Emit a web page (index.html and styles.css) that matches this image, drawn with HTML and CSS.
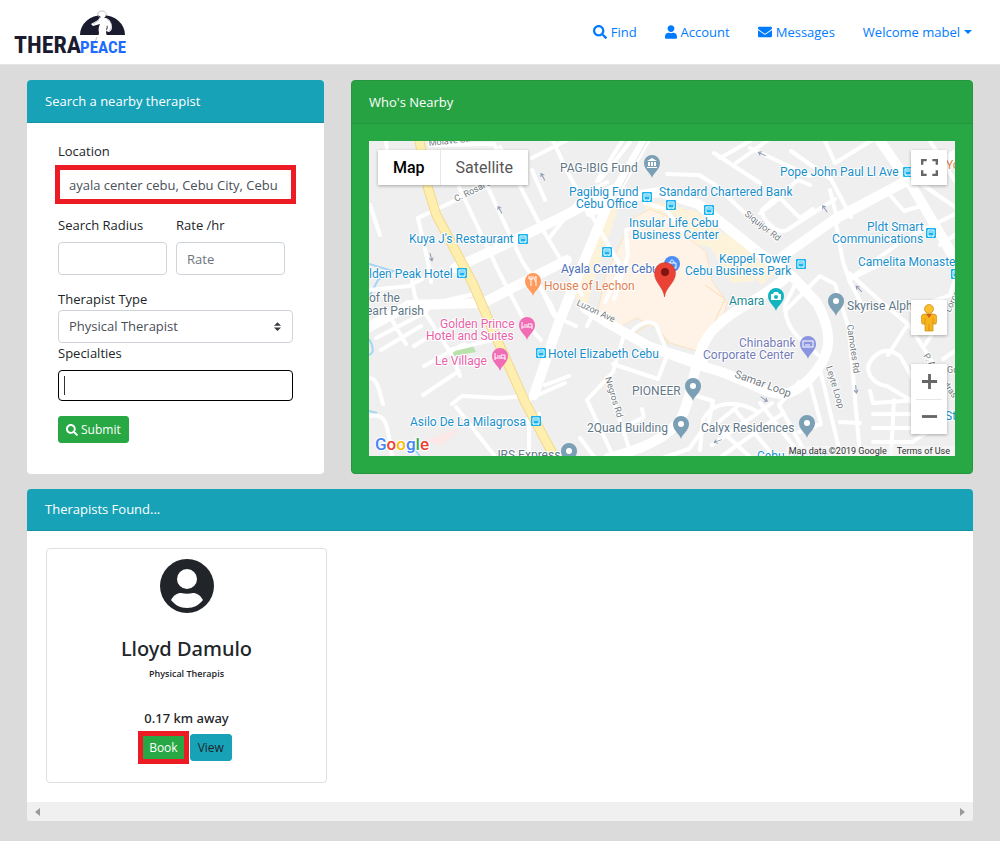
FILE: index.html
```html
<!DOCTYPE html>
<html lang="en">
<head>
<meta charset="utf-8">
<title>Therapeace</title>
<link rel="stylesheet" href="styles.css">
</head>
<body>
<header class="navbar">
  <a class="brand" href="#" aria-label="Therapeace">
    <svg class="brand-logo" viewBox="0 0 116 44">
      <path d="M69 25a22.500 20 0 0 1 45 0z" fill="#1b1b2f"/>
      <path d="M87 3c0-4 8-4 8 1 0 2-1 3-2 4 4 0 6 2 7 5 2 4 1 8-2 9l-3-1c2-2 2-4 1-6l-1 7 1 5v16h-5l-2-14-3 14h-6c3-8 7-14 8-20-1-4 0-7 1-9l-7 2-2-2 7-4c1-2 2-2 3-3-2-1-3-2-3-4z" fill="#fff"/>
      <path d="M89 8c-4-4-2-7 2-7s6 4 2 7M88 10l-6 4M96 9c5 3 6 8 2 12M86 27c-2 6-5 9-6 15" fill="none" stroke="#a9abb2" stroke-width="0.700"/>
      <text class="logo-thera" x="3" y="43">THERA</text>
      <text class="logo-peace" x="69" y="43">PEACE</text>
    </svg>
  </a>
  <nav class="nav-links">
    <a href="#"><svg class="icon" viewBox="0 0 512 512"><path d="M505 442.700 405.300 343c-4.500-4.500-10.600-7-17-7H372c27.600-35.300 44-79.700 44-128C416 93.100 322.900 0 208 0S0 93.100 0 208s93.100 208 208 208c48.300 0 92.700-16.400 128-44v16.300c0 6.400 2.500 12.500 7 17l99.700 99.700c9.400 9.400 24.600 9.400 33.900 0l28.300-28.300c9.400-9.400 9.400-24.600.1-34zM208 336c-70.700 0-128-57.200-128-128 0-70.700 57.200-128 128-128 70.700 0 128 57.200 128 128 0 70.700-57.200 128-128 128z"/></svg>Find</a>
    <a href="#"><svg class="icon icon-user" viewBox="0 0 448 512"><path d="M224 256c70.700 0 128-57.300 128-128S294.700 0 224 0 96 57.300 96 128s57.300 128 128 128zm89.600 32h-16.700c-22.200 10.200-46.900 16-72.900 16s-50.600-5.800-72.900-16h-16.700C60.200 288 0 348.200 0 422.400V464c0 26.500 21.500 48 48 48h352c26.500 0 48-21.500 48-48v-41.600c0-74.200-60.200-134.400-134.400-134.400z"/></svg>Account</a>
    <a href="#"><svg class="icon" viewBox="0 0 512 512"><path d="M502.300 190.800c3.900-3.100 9.700-.2 9.700 4.700V400c0 26.500-21.500 48-48 48H48c-26.500 0-48-21.500-48-48V195.600c0-5 5.700-7.800 9.700-4.700 22.400 17.400 52.100 39.500 154.100 113.600 21.100 15.400 56.700 47.800 92.200 47.600 35.700.3 72-32.800 92.300-47.600 102-74.100 131.600-96.300 154-113.700zM256 320c23.200.4 56.600-29.200 73.400-41.400 132.700-96.300 142.800-104.700 173.400-128.700 5.800-4.500 9.200-11.500 9.200-18.900v-19c0-26.500-21.500-48-48-48H48c-26.500 0-48 21.500-48 48v19c0 7.400 3.400 14.300 9.200 18.900 30.600 23.900 40.700 32.400 173.400 128.700 16.800 12.200 50.200 41.800 73.400 41.400z"/></svg>Messages</a>
    <a href="#" class="dropdown">Welcome mabel<svg class="caret" viewBox="0 0 8 4"><path d="M0 0h8L4 4z"/></svg></a>
  </nav>
</header>

<main class="page">
  <section class="card search-card">
    <h2 class="card-header teal">Search a nearby therapist</h2>
    <form class="search-form">
      <div class="field">
        <label for="location">Location</label>
        <div class="highlight"><input id="location" class="control" type="text" value="ayala center cebu, Cebu City, Cebu"></div>
      </div>
      <div class="field-pair">
        <div class="field"><label for="radius">Search Radius</label><input id="radius" class="control" type="text"></div>
        <div class="field"><label for="rate">Rate /hr</label><input id="rate" class="control" type="text" placeholder="Rate"></div>
      </div>
      <div class="field field-tight">
        <label for="type">Therapist Type</label>
        <div class="select-wrap">
          <select id="type" class="control"><option>Physical Therapist</option></select>
          <svg class="select-arrow" viewBox="0 0 4 5"><path d="M2 0 0 2h4zM2 5 0 3h4z"/></svg>
        </div>
      </div>
      <div class="field">
        <label for="specialties">Specialties</label>
        <div class="text-cursor"><input id="specialties" class="control focused" type="text"></div>
      </div>
      <button class="btn green submit" type="button"><svg class="icon" viewBox="0 0 512 512"><path d="M505 442.700 405.300 343c-4.500-4.500-10.600-7-17-7H372c27.600-35.300 44-79.700 44-128C416 93.100 322.900 0 208 0S0 93.100 0 208s93.100 208 208 208c48.300 0 92.700-16.400 128-44v16.300c0 6.400 2.500 12.500 7 17l99.700 99.700c9.400 9.400 24.600 9.400 33.900 0l28.300-28.300c9.400-9.400 9.400-24.600.1-34zM208 336c-70.700 0-128-57.200-128-128 0-70.700 57.200-128 128-128 70.700 0 128 57.200 128 128 0 70.700-57.200 128-128 128z"/></svg>Submit</button>
    </form>
  </section>

  <section class="card map-card">
    <h2 class="card-header">Who's Nearby</h2>
    <div class="map">
      <svg class="map-canvas" viewBox="369 141 586 315">
        <defs>
          <g id="pin"><path d="M0 13C-1 8-8 5-8-2a8 8 0 0 1 16 0C8 5 1 8 0 13z"/></g>
          <g id="stop"><rect x="-5" y="-5" width="10" height="10" rx="1" fill="#18b4f2"/><path d="M-3-3h6v6h-6zM-2-1h4M-2 4v-1M2 4v-1" fill="none" stroke="#fff"/></g>
          <g id="arrow"><path d="M0 4v-8M-2-1 0-4l2 3" fill="none" stroke="#8f9bb3"/></g>
        </defs>
        <rect x="369" y="141" width="586" height="315" fill="#efefef"/>
        <path d="M641 141h7l-28 54-3 17-18 54-12 40-12-8 8-36 16-50z" fill="#fdf2da"/>
        <path d="M644 206l16-4 38 10 50 43 6 26-22 2-22-36-35-6zM722 225l55 45-15 15-28-30z" fill="#fdf2da"/>
        <path d="M632 219l18-10 29 12 9 17 18 14 6 29 15 21-3 13-27 36-27-8-12-14-21-11-20 10-20-13 8-38z" fill="#fff3e8" stroke="#fbe3c0" stroke-width="1"/>
        <path d="M600 318l28 20 24-16 16 22M705 285l20 14-10 22 6 8-22 20" fill="none" stroke="#fae0ae"/>
        <path d="M452 351l20-7 4 8-22 4z" fill="#b9e2ad"/>
        <path d="M369 264l24 7-15 9-9 17M369 339c5 8 5 14 0 16M369 411l8 2M412 446l8 10" fill="none" stroke="#a6d5f5" stroke-width="2"/>
        <path d="M425 440l36-12-20 18z" fill="#fce8e6"/>

        <g class="roads minor">
          <path d="M386 141l2 18M430 145l64-1 14 30M418 218l34-16 63-38M418 218l10 44 3 20M459 187l40 85 26 50 16 18M483 177l39 84 30 45M500 147l40 78 30 50 12 20M553 141l16 34 32 57 20 35M532 158l58-30M600 180l30-38M369 290l40-4 13-7M412 280l3 17 35 55 10 24M369 325l45-22 14 6M376 338l50-26M381 350l40-24M392 320l14 24M414 346l40-25M424 366l40-22M423 395l36-24M440 302l38-9M369 378c9 0 10 13 14 26M369 416c20-4 18 12 23 40M452 404l10-8 40 2 24-2M456 407l38 48M529 399v57M529 399l36-16M450 350l50-12M525 420l14-6M545 385l24-9M540 286l14 30 22 10"/>
          <path d="M667 174l32 1 15 9 34 32 20 10M714 153l46 30M720 158l30-17M736 163l50-36M750 148l60 28M791 151l40 28 20 38M825 141l10 22 39-24M810 185l-12-5M760 213l20-15 20 20 13-9M798 180l-25 20-11 10c0 10 15 25 25 20l48-31M830 190l8 32M836 224l7 38 7 20 15 28M890 195l14 16 20-6M855 275l50-36 50-25M930 141l25 40M904 172l51 35M940 245l15-10M849 273l30 27 30 25 46 73M849 280l40-20M795 285l-10 20c0 20 10 30 20 38l13 12M785 311l35-35 15 8 14 45 11 127M819 365l22 92M840 422l20 1M888 355l18-28M943 359l12-8M910 310l40-15 5-15M925 345l20-30M872 359c-10 12 2 26 15 27l28 17 5-12-20-35c-8-6-18-9-28 3zM870 391l3 12 46-3M873 414h45M873 428h40M873 442h40M894 400l-3 56M915 440l40-25M810 383l11 41-22 8M799 382l-20 23 28 51"/>
          <path d="M569 302l-22 54M595 310l-8 16M628 337c8-14 22-18 28-12l10 24 40 12M624 335l-11 37-26 28 26 56M613 364l45 15 10-26M606 378l25 76M580 438l15 20M630 424l14-7-2-8M694 395l19 6-4 20-20 28-30 10M700 450l3-30c10-20 35-20 55-8M709 430l30-25M712 445l60-42M722 456l60-42M735 410l38 45M715 425l34 31M760 403l41 53M620 270l-15 32"/>
          <path d="M550 237l34-43 23-12M545 295l16 30M622 141l-25 40M640 224l-14 6 2 25-14 44M645 203l20 6 20 24M370 205l10 30M545 200l-13-30"/>
        </g>
        <g class="roads main">
          <path d="M369 327l40-22 74-2M455 268l45-21 64-31 56-30M483 303l84-43M645 141l-38 65-24 58-24 58-25 73"/>
          <path d="M590 212l32-14 38-6 38 12 60 48 35 25 24 26c16 30 14 48 0 67-10 13-20 22-34 24-20 0-45-19-75-26l-60-22-40-23-23-15M783 256l52-37 75-40 45-24M880 141l33 47 46 78M787 277c-29 25-52 30-73 52-21 20-20 68-34 91-13 18-37 29-72 38"/>
        </g>
        <path d="M419 138l9 50 8 26 37 70 22 51 30 67 31 58" fill="none" stroke="#f3d88b" stroke-width="10"/>
        <path d="M419 138l9 50 8 26 37 70 22 51 30 67 31 58" fill="none" stroke="#ffefaf" stroke-width="8"/>
        <path d="M648 139l-36 65" stroke="#e2e4e7" fill="none"/>

        <g class="streets">
          <text x="429" y="146" transform="rotate(-6 429 146)">Molave St.</text>
          <text x="456" y="202" transform="rotate(-26 456 202)">C. Rosal St.</text>
          <text x="744" y="215" transform="rotate(38 744 215)">Siquijor Rd</text>
          <text x="576" y="305" transform="rotate(25 576 305)">Luzon Ave</text>
          <text x="605" y="378" transform="rotate(73 605 378)">Negros Rd</text>
          <text x="734" y="377" transform="rotate(20 734 377)" class="large">Samar Loop</text>
          <text x="847" y="325" transform="rotate(82 847 325)">Camotes Rd</text>
          <text x="826" y="367" transform="rotate(73 826 367)">Leyte Loop</text>
          <text x="923" y="356" transform="rotate(55 923 356)">P. Almendras</text>
          <text x="950" y="313" transform="rotate(-65 950 313)">Lorca St</text>
          <text x="947" y="373">Gu</text>
        </g>
        <g class="places">
          <g class="slate">
            <text x="560" y="172">PAG-IBIG Fund</text><text x="847" y="310">Skyrise Alpha</text><text x="632" y="395">PIONEER</text><text x="587" y="432">2Quad Building</text><text x="701" y="432">Calyx Residences</text><text x="494" y="459">JRS Express</text><text x="369" y="302">of the</text><text x="366" y="315">eart Parish</text>
          </g>
          <g class="blue">
            <text x="569" y="196">Pagibig Fund</text><text x="576" y="208">Cebu Office</text><text x="659" y="196">Standard Chartered Bank</text><text x="629" y="227">Insular Life Cebu</text><text x="632" y="239">Business Center</text><text x="409" y="243">Kuya J's Restaurant</text><text x="369" y="278">lden Peak Hotel</text><text x="719" y="263">Keppel Tower</text><text x="685" y="275">Cebu Business Park</text><text x="780" y="176">Pope John Paul Ll Ave</text><text x="867" y="231">Pldt Smart</text><text x="832" y="243">Communications</text><text x="858" y="266">Camelita Monastery</text><text x="548" y="358">Hotel Elizabeth Cebu</text><text x="410" y="426">Asilo De La Milagrosa</text><text x="757" y="460">Cebu Doctors</text><text x="945" y="420">St</text>
          </g>
          <text x="561" y="273" class="indigo">Ayala Center Cebu</text>
          <text x="544" y="290" class="orange">House of Lechon</text><text x="946" y="169" class="orange">Yo</text>
          <g class="pink"><text x="440" y="328">Golden Prince</text><text x="426" y="340">Hotel and Suites</text><text x="435" y="365">Le Village</text></g>
          <text x="729" y="305" class="sea">Amara</text>
          <g class="violet"><text x="739" y="347">Chinabank</text><text x="703" y="359">Corporate Center</text></g>
        </g>
        <use href="#stop" x="647" y="197"/><use href="#stop" x="671" y="205"/><use href="#stop" x="709" y="210"/><use href="#stop" x="607" y="252"/><use href="#stop" x="523" y="239"/><use href="#stop" x="462" y="273"/><use href="#stop" x="541" y="353"/><use href="#stop" x="536" y="421"/><use href="#stop" x="801" y="264"/><use href="#stop" x="931" y="233"/><use href="#stop" x="908" y="172"/><use href="#stop" x="956" y="274"/>
        <use href="#arrow" transform="translate(500 210) rotate(-28)"/><use href="#arrow" transform="translate(543 177) rotate(-28)"/><use href="#arrow" transform="translate(431 257) rotate(165)"/><use href="#arrow" transform="translate(762 154) rotate(-65)"/><use href="#arrow" transform="translate(825 209) rotate(-35)"/><use href="#arrow" transform="translate(859 289) rotate(-45)"/><use href="#arrow" transform="translate(856 389) rotate(175)"/><use href="#arrow" transform="translate(764 399) rotate(125)"/><use href="#arrow" transform="translate(718 441) rotate(-110)"/>
        <g fill="#7b9fb4"><use href="#pin" x="652" y="165"/><use href="#pin" x="836" y="303"/><use href="#pin" x="693" y="388"/><use href="#pin" x="681" y="426"/><use href="#pin" x="807" y="425"/><use href="#pin" x="569" y="453"/></g>
        <g fill="#fff"><circle cx="836" cy="301" r="3"/><circle cx="693" cy="386" r="3"/><circle cx="681" cy="424" r="3"/><circle cx="807" cy="423" r="3"/><circle cx="569" cy="451" r="3"/><path d="M647 161l5-3 5 3zM648 162h2v4h-2zM651 162h2v4h-2zM654 162h2v4h-2zM647 167h10v1h-10z"/></g>
        <use href="#pin" x="533" y="283" fill="#ff9a5c"/><path d="M531 276v10M529 276v3h4v-3M536 286v-10c-2 2-2 4 0 6" fill="none" stroke="#fff"/>
        <g fill="#f06cb4"><use href="#pin" x="527" y="327"/><use href="#pin" x="500" y="358"/></g>
        <path d="M522 322v7M522 327h10v2M524 325h3M528 327v-3h4v3M495 353v7M495 358h10v2M497 356h3M501 358v-3h4v3" fill="none" stroke="#fff"/>
        <use href="#pin" x="776" y="298" fill="#12b5bf"/><path d="M771 294h2l1-2h4l1 2h2v6h-10z" fill="#fff"/><circle cx="776" cy="297" r="2" fill="#12b5bf"/>
        <use href="#pin" x="808" y="346" fill="#8b94df"/><rect x="803" y="341" width="10" height="6" fill="none" stroke="#fff"/><path d="M805 345h5" stroke="#fff"/>
        <circle cx="672" cy="264" r="8" fill="#4c8df6"/><path d="M668 263h8v5h-8zM670 263c0-4 4-4 4 0" fill="none" stroke="#fff"/>
        <path d="M664.500 297c-1-10-10-14-10-24a10.500 10.500 0 0 1 21 0c0 10-10 14-11 24z" fill="#ea4335" stroke="#c5362b" stroke-width="0.500"/><circle cx="665" cy="272" r="4" fill="#811411"/>
        <text class="google" x="375" y="450"><tspan fill="#4285f4">G</tspan><tspan fill="#ea4335">o</tspan><tspan fill="#fbbc05">o</tspan><tspan fill="#4285f4">g</tspan><tspan fill="#34a853">l</tspan><tspan fill="#ea4335">e</tspan></text>
      </svg>
      <div class="map-types"><button type="button" class="active">Map</button><button type="button">Satellite</button></div>
      <button type="button" class="map-button fullscreen" aria-label="Fullscreen"><svg viewBox="0 0 18 18"><path d="M1 6V1h5M12 1h5v5M17 12v5h-5M6 17H1v-5" fill="none" stroke="#666" stroke-width="3"/></svg></button>
      <div class="map-tools">
        <button type="button" class="map-button" aria-label="Street view"><svg class="pegman" viewBox="0 0 16 28"><path d="M4 10C1 10 0 12 0 14l1 6h3v7h8v-7h3l1-6c0-2-1-4-4-4z" fill="#f9b41d" stroke="#c98b12" stroke-width="0.700"/><path d="M5 10h6l-3 4z" fill="#d9601f"/><path d="M4 14v6M12 14v6M8 20v7" fill="none" stroke="#c98b12" stroke-width="0.700"/><circle cx="8" cy="5" r="4.500" fill="#fdbf2d" stroke="#c98b12" stroke-width="0.700"/></svg></button>
        <div class="zoom">
          <button type="button" class="map-button" aria-label="Zoom in"><svg viewBox="0 0 18 18"><path d="M1 9h16M9 1v16" stroke="#666" stroke-width="3"/></svg></button>
          <button type="button" class="map-button" aria-label="Zoom out"><svg viewBox="0 0 18 18"><path d="M1 9h16" stroke="#666" stroke-width="3"/></svg></button>
        </div>
      </div>
      <div class="credits"><span>Map data ©2019 Google</span><a href="#">Terms of Use</a></div>
    </div>
  </section>

  <section class="card results-card">
    <h2 class="card-header teal">Therapists Found...</h2>
    <div class="results">
      <article class="therapist">
        <svg class="avatar" viewBox="0 0 54 54"><circle cx="27" cy="27" r="27" fill="#212529"/><circle cx="27" cy="20" r="10" fill="#fff"/><path d="M11 41c3-5 6-7 10-7 4 1 8 1 12 0 4 0 7 2 10 7-4 5-9 8-16 8s-12-3-16-8z" fill="#fff"/></svg>
        <h3 class="name">Lloyd Damulo</h3>
        <p class="role">Physical Therapis</p>
        <p class="distance">0.17 km away</p>
        <div class="actions">
          <span class="highlight book"><button type="button" class="btn green">Book</button></span>
          <button type="button" class="btn view">View</button>
        </div>
      </article>
    </div>
    <div class="scrollbar"><svg viewBox="0 0 5 8"><path d="M5 0v8L0 4z"/></svg><svg viewBox="0 0 5 8"><path d="M0 0v8l5-4z"/></svg></div>
  </section>
</main>
</body>
</html>
```

FILE: styles.css
```css
* { box-sizing: border-box; }
body { margin: 0; background: #dbdbdb; color: #212529; font: 13px/21px "Open Sans", "Noto Sans", sans-serif; }
button, input, select { font: inherit; margin: 0; }
h2, h3, p { margin: 0; font-weight: 400; }
a { text-decoration: none; }
svg { display: block; }

.navbar { display: flex; align-items: center; justify-content: space-between; padding: 10px 28px 10px 11px; background: #fff; border-bottom: 1px solid #e6e6e6; }
.brand-logo { width: 116px; height: 44px; overflow: visible; }
.logo-thera, .logo-peace { font-family: "Liberation Sans Narrow", "Roboto Condensed", "Liberation Sans", sans-serif; font-weight: 700; }
.logo-thera { font-size: 24px; fill: #1b1b2f; }
.logo-peace { font-size: 17px; fill: #1f6bff; }
.nav-links { display: flex; gap: 28px; }
.nav-links a { display: flex; align-items: center; gap: 4px; color: #007bff; }
.icon { width: 14px; height: 14px; fill: currentColor; }
.icon-user { width: 12px; }
.caret { width: 8px; height: 4px; fill: currentColor; }

.page { display: grid; grid-template-columns: 297fr 622fr; gap: 15px 27px; padding: 15px 27px 18px; }
.card { background: #fff; border-radius: 4px; overflow: hidden; min-width: 0; }
.card-header { padding: 11px 18px 10px; font-size: 13px; line-height: 21px; color: #fff; border-bottom: 1px solid #24963e; }
.card-header.teal { background: #17a2b8; border-color: #1391a5; }

.search-form { display: flex; flex-direction: column; align-items: stretch; gap: 14px; padding: 18px 31px; }
.field { display: flex; flex-direction: column; gap: 6px; min-width: 0; }
.field-tight { gap: 0; margin-bottom: -14px; }
.field-pair { display: grid; grid-template-columns: 1fr 1fr; gap: 9px; padding-right: 8px; }
.control { display: block; width: 100%; height: 33px; padding: 0 10px; border: 1px solid #ced4da; border-radius: 4px; background: #fff; color: #495057; appearance: none; }
.control::placeholder { color: #6c757d; opacity: 1; }
.control.focused { height: 31px; border-color: #000; }
.highlight { position: relative; }
.highlight::after { content: ""; position: absolute; inset: -3px; border: 5px solid #ed1c24; pointer-events: none; }
.select-wrap, .text-cursor { position: relative; }
.select-arrow { position: absolute; right: 12px; top: 12px; width: 7px; height: 9px; fill: #343a40; pointer-events: none; }
.text-cursor::after { content: ""; position: absolute; left: 6px; top: 6px; bottom: 6px; width: 1px; background: #333; }
.btn { display: flex; align-items: center; justify-content: center; gap: 3px; height: 27px; padding: 0 7px; border: 1px solid #17a2b8; border-radius: 3px; font-size: 12px; line-height: 18px; }
.btn .icon { width: 12px; height: 12px; }
.green { background: #28a745; border-color: #28a745; color: #fff; }
.submit { align-self: flex-start; margin-top: 1px; }

.map-card { background: #28a745; border: 1px solid #24963e; }
.map-card .card-header { padding: 11px 17px 10px; background: #27a243; }
.map { position: relative; margin: 17px; overflow: hidden; font-family: Roboto, sans-serif; }
.map-canvas { width: 100%; height: auto; }
.roads { fill: none; stroke: #fff; stroke-linecap: round; stroke-linejoin: round; }
.minor { stroke-width: 4px; }
.main { stroke-width: 10px; }
.streets text { font-size: 9px; fill: #737b82; }
.streets .large { font-size: 11px; }
.places text, .streets text { paint-order: stroke; stroke: #fff; stroke-width: 2px; stroke-linejoin: round; }
.places { font-size: 12px; }
.slate { fill: #5f7787; }
.blue { fill: #1a8fcb; }
.indigo { fill: #4a6fb8; }
.orange { fill: #df7f4f; }
.pink { fill: #ea5fa9; }
.sea { fill: #188b94; }
.violet { fill: #737bb8; }
.google { font: 500 17px Roboto, sans-serif; paint-order: stroke; stroke: #fff; stroke-width: 2px; }
.map button { border: 0; background: #fff; cursor: pointer; }
.map-types { position: absolute; left: 9px; top: 9px; display: flex; box-shadow: 0 1px 3px rgba(0,0,0,.3); }
.map-types button { height: 35px; padding: 0 15px; font-size: 16px; color: #565656; }
.map-types .active { color: #000; font-weight: 500; border-right: 1px solid #e6e6e6; }
.map-button { display: flex; align-items: center; justify-content: center; width: 36px; height: 35px; padding: 0; box-shadow: 0 1px 3px rgba(0,0,0,.3); }
.map-button svg { width: 17px; height: 17px; }
.fullscreen { position: absolute; right: 8px; top: 9px; }
.map-button .pegman { width: 16px; height: 28px; }
.map-tools { position: absolute; right: 8px; bottom: 22px; display: flex; flex-direction: column; gap: 29px; }
.zoom { box-shadow: 0 1px 3px rgba(0,0,0,.3); }
.zoom .map-button { box-shadow: none; }
.zoom .map-button + .map-button { background: linear-gradient(#e6e6e6, #e6e6e6) center top / 26px 1px no-repeat #fff; }
.credits { position: absolute; right: 0; bottom: 0; display: flex; gap: 10px; padding: 0 5px 0 3px; background: rgba(245,245,245,.75); font-size: 9px; line-height: 10px; color: #333; }
.credits a { color: #333; }

.results-card { grid-column: 1 / -1; }
.results-card .card-header { padding-top: 10px; }
.results { padding: 17px 19px 19px; }
.therapist { display: flex; flex-direction: column; align-items: center; width: 281px; padding: 10px 10px 21px; border: 1px solid #dfdfdf; border-radius: 4px; }
.avatar { width: 54px; height: 54px; }
.name { margin-top: 22px; font-family: "Noto Sans", "Open Sans", sans-serif; font-size: 20px; line-height: 28px; font-weight: 500; }
.role { margin-top: 4px; font-size: 9px; line-height: 14px; font-weight: 600; }
.distance { margin-top: 27px; font-family: "Noto Sans", "Open Sans", sans-serif; font-weight: 500; }
.actions { display: flex; gap: 4px; margin-top: 5px; }
.book::after { inset: -3px; }
.view { background: #17a2b8; color: #212529; }
.scrollbar { display: flex; align-items: center; justify-content: space-between; height: 19px; padding: 0 8px; background: #f0f0f0; }
.scrollbar svg { width: 5px; height: 8px; fill: #999; }
```
